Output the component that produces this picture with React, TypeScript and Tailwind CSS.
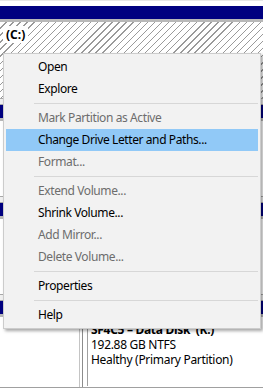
import React from "react";

type Item = { label: string; disabled?: boolean; active?: boolean } | "sep";

const menu: Item[] = [
  { label: "Open" },
  { label: "Explore" },
  "sep",
  { label: "Mark Partition as Active", disabled: true },
  { label: "Change Drive Letter and Paths...", active: true },
  { label: "Format...", disabled: true },
  "sep",
  { label: "Extend Volume...", disabled: true },
  { label: "Shrink Volume..." },
  { label: "Add Mirror...", disabled: true },
  { label: "Delete Volume...", disabled: true },
  "sep",
  { label: "Properties" },
  "sep",
  { label: "Help" },
];

const hatch =
  "bg-[repeating-linear-gradient(135deg,#ffffff_0px,#ffffff_4px,#9a9a9a_4px,#9a9a9a_5px)]";

function Gap() {
  return <div className="h-[7px] bg-[#f0f0f0] border-y border-[#a9a9a9]" />;
}

function Header() {
  return (
    <>
      <div className="h-[13px] bg-[#000080]" />
      <div className="h-[3px] bg-[#b8b8b8]" />
    </>
  );
}

export default function App() {
  return (
    <div
      className="relative w-[263px] h-[391px] overflow-hidden bg-white text-[12px] text-black"
      style={{ fontFamily: '"Segoe UI", "Noto Sans", "Open Sans", sans-serif' }}
    >
      {/* disk map behind the menu */}
      <div className="h-[6px] bg-white border-t border-[#e6e6e6]" />
      <Header />
      <div className={`h-[76px] pl-[3px] pt-[4px] ${hatch}`}>
        <span className="bg-white px-[3px] font-bold leading-[15px]">(C:)</span>
      </div>
      <Gap />
      <Header />
      <div className="h-[75px] bg-white" />
      <Gap />
      <Header />
      <div className="h-[75px] bg-white" />
      <Gap />
      <div className="flex">
        <div className="w-[79px]">
          <Header />
          <div className="h-[70px] bg-white" />
        </div>
        <div className="w-[4px] h-[86px] bg-white border-l border-[#c4c4c4] border-r border-r-[#8c8c8c]" />
        <div className="flex-1">
          <Header />
          <div className="h-[70px] bg-white pl-[4px] pt-[4px]">
            <div className="h-[65px] border-l border-[#a0a0a0] pl-[3px] pt-[1px] leading-[15px] tracking-[-0.3px]">
              <div className="font-bold whitespace-nowrap">SF4C5 – Data Disk&nbsp; (K:)</div>
              <div>192.88 GB NTFS</div>
              <div>Healthy (Primary Partition)</div>
            </div>
          </div>
        </div>
      </div>
      <div className="h-[1px] bg-[#a0a0a0]" />

      {/* context menu */}
      <div className="absolute left-[3px] top-[53px] w-[258px] bg-[#f2f2f2] border border-[#cccccc] py-[2px] shadow-[2px_2px_3px_rgba(0,0,0,0.35)]">
        {menu.map((item, i) =>
          item === "sep" ? (
            <div key={i} className="h-[7px] flex items-center ml-[30px] mr-[2px]">
              <div className="h-[1px] w-full bg-[#d7d7d7]" />
            </div>
          ) : (
            <div
              key={i}
              className={`h-[22px] mx-[2px] pl-[32px] leading-[22px] tracking-[-0.4px] whitespace-nowrap ${
                item.active ? "bg-[#91c9f7]" : ""
              } ${item.disabled ? "text-[#6d6d6d]" : "text-black"}`}
            >
              {item.label}
            </div>
          )
        )}
      </div>
    </div>
  );
}
